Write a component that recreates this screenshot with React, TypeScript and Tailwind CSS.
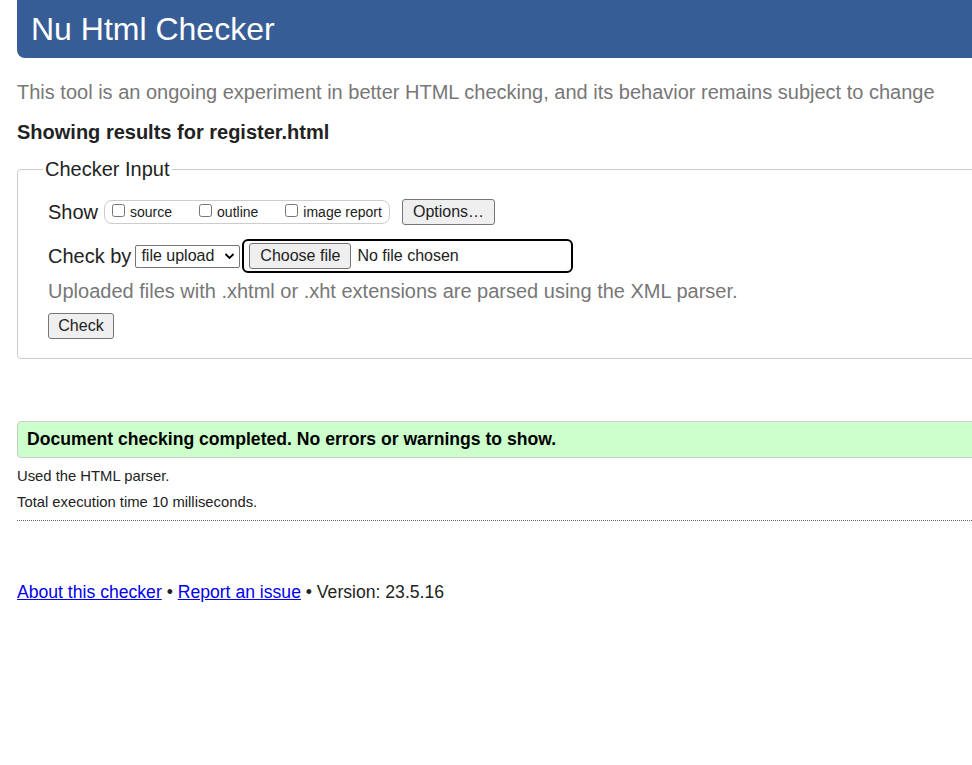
import React from "react";

export default function App() {
  return (
    <div className="w-[972px] h-[765px] overflow-hidden bg-white text-[#222] font-['Liberation_Sans',Arial,sans-serif]">
      <div className="w-[1100px] pl-[17px]">
        <div className="h-[58px] bg-[#365d95] rounded-b-[8px] flex items-center pl-[14px]">
          <h1 className="text-[32px] leading-none text-white font-normal">Nu Html Checker</h1>
        </div>
        <p className="mt-[21px] text-[20px] leading-[26px] text-[#777]">
          This tool is an ongoing experiment in better HTML checking, and its behavior remains subject to change
        </p>
        <p className="mt-[15px] text-[20px] leading-[24px] font-bold text-[#222]">Showing results for register.html</p>

        <fieldset className="mt-[13px] border border-[#ccc] rounded-[4px] pl-[30px] pr-4 pb-[19px] pt-[10px] min-w-0">
          <legend className="ml-[-5px] px-[2px] text-[20px] leading-[24px] text-[#222]">Checker Input</legend>
          <div className="flex items-center h-[26px] mt-[8px]">
            <span className="text-[20px] leading-none">Show</span>
            <div className="ml-[6px] flex items-center h-[24px] w-[286px] border border-[#ccc] rounded-[8px] pl-[7px] text-[14px]">
              <label className="flex items-center">
                <input type="checkbox" className="w-[13px] h-[13px] m-0 mr-[5px] mt-[-4px]" />
                <span>source</span>
              </label>
              <label className="flex items-center ml-[27px]">
                <input type="checkbox" className="w-[13px] h-[13px] m-0 mr-[5px] mt-[-4px]" />
                <span>outline</span>
              </label>
              <label className="flex items-center ml-[27px]">
                <input type="checkbox" className="w-[13px] h-[13px] m-0 mr-[5px] mt-[-4px]" />
                <span>image report</span>
              </label>
            </div>
            <button className="ml-[12px] h-[26px] w-[93px] border border-[#767676] rounded-[3px] bg-[#efefef] text-[16px] leading-none">
              Options…
            </button>
          </div>

          <div className="flex items-center mt-[14px] h-[34px]">
            <span className="text-[20px] leading-none">Check by</span>
            <div className="ml-[4px] h-[23px] w-[105px] border border-[#767676] rounded-[2px] flex items-center pl-[5px] pr-[4px] text-[16px] justify-between">
              <span>file upload</span>
              <svg width="11" height="8" viewBox="0 0 11 8"><path d="M1.5 2 L5.5 6 L9.5 2" stroke="#000" strokeWidth="1.8" fill="none" /></svg>
            </div>
            <div className="ml-[2px] h-[34px] w-[331px] border-2 border-black rounded-[6px] flex items-center pl-[5px]">
              <button className="h-[26px] w-[102px] border border-[#767676] rounded-[3px] bg-[#efefef] text-[16px] leading-none">
                Choose file
              </button>
              <span className="ml-[6px] text-[16px]">No file chosen</span>
            </div>
          </div>

          <p className="mt-[5px] text-[20px] leading-[26px] text-[#777]">
            Uploaded files with .xhtml or .xht extensions are parsed using the XML parser.
          </p>

          <button className="mt-[9px] h-[26px] w-[66px] border border-[#767676] rounded-[3px] bg-[#efefef] text-[16px] leading-none">
            Check
          </button>
        </fieldset>

        <div className="mt-[62px] h-[37px] bg-[#ccffcc] border border-[#ccc] rounded-l-[4px] flex items-center pl-[9px]">
          <span className="text-[17.6px] font-bold text-black">Document checking completed. No errors or warnings to show.</span>
        </div>
        <p className="mt-[10px] text-[14.8px] leading-[17px] text-[#222]">Used the HTML parser.</p>
        <p className="mt-[9px] text-[14.8px] leading-[17px] text-[#222]">Total execution time 10 milliseconds.</p>
        <div className="mt-[9px] border-t border-dotted border-[#666]" />

        <p className="mt-[60px] text-[17.6px] leading-[22px] text-[#222]">
          <a href="#" className="text-[#0000ee] underline">About this checker</a>
          {" • "}
          <a href="#" className="text-[#0000ee] underline">Report an issue</a>
          {" • Version: 23.5.16"}
        </p>
      </div>
    </div>
  );
}
